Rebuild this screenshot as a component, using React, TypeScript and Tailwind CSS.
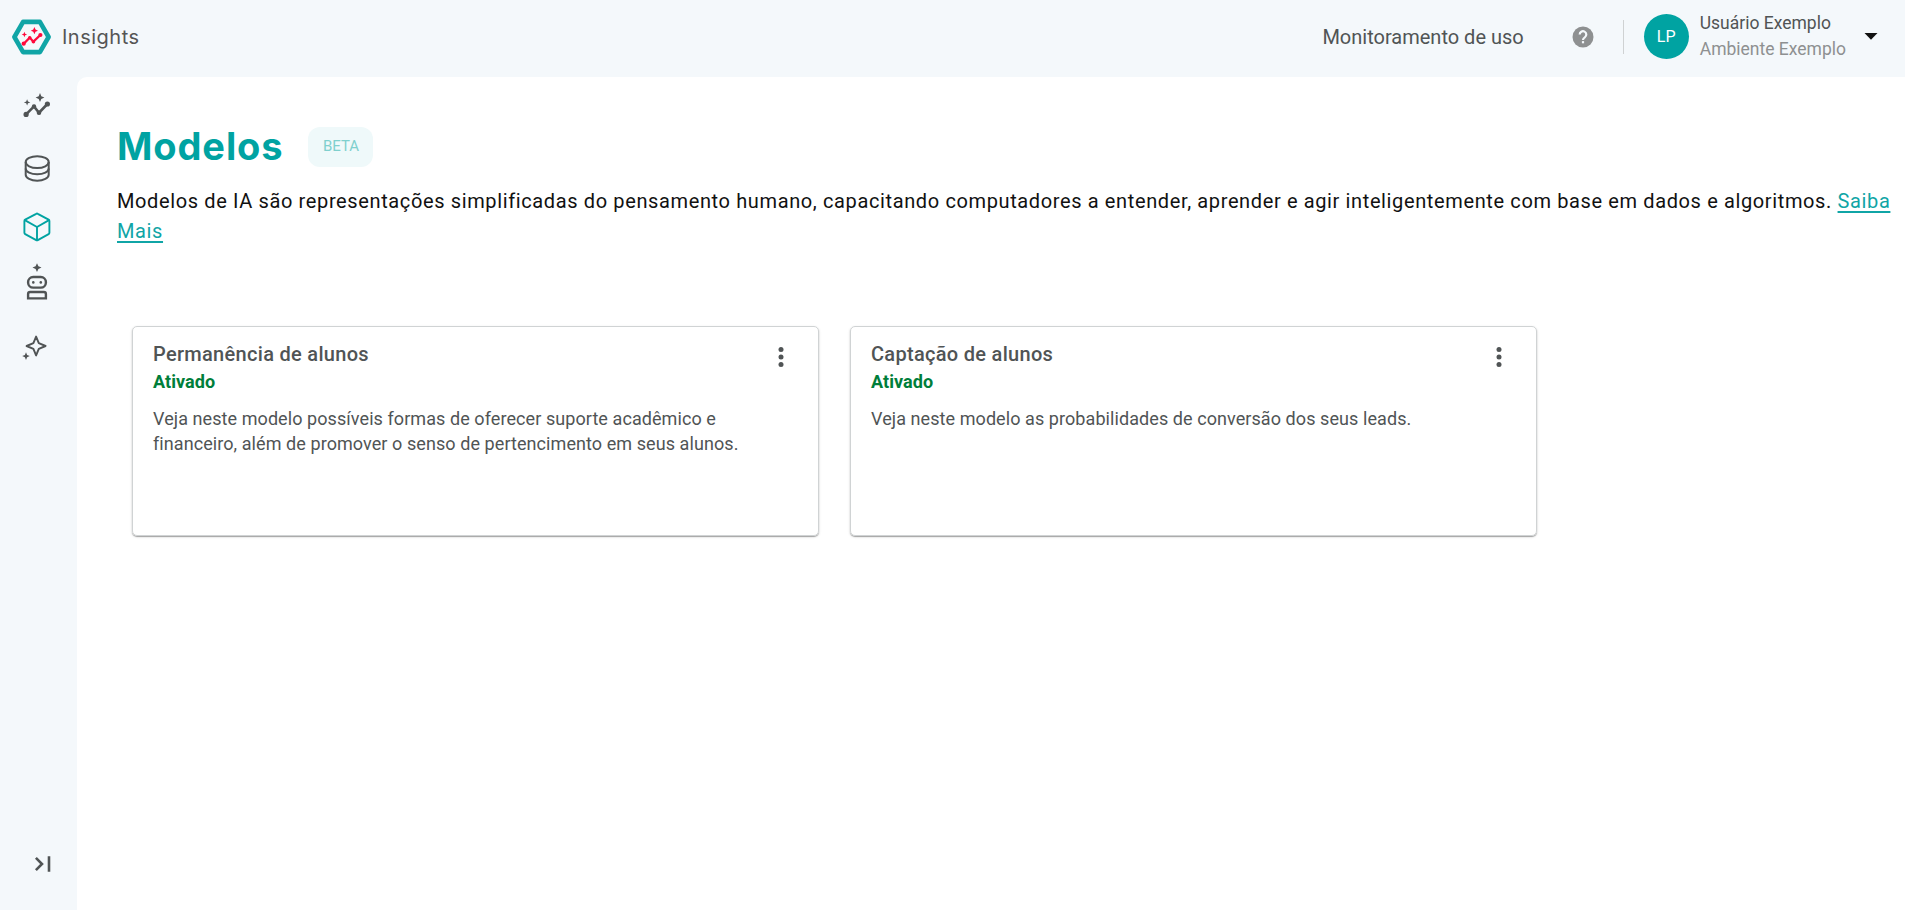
import { ReactNode } from 'react';

interface Model {
  title: string;
  status: string;
  description: string;
}

const models: Model[] = [
  {
    title: 'Permanência de alunos',
    status: 'Ativado',
    description:
      'Veja neste modelo possíveis formas de oferecer suporte acadêmico e financeiro, além de promover o senso de pertencimento em seus alunos.',
  },
  {
    title: 'Captação de alunos',
    status: 'Ativado',
    description: 'Veja neste modelo as probabilidades de conversão dos seus leads.',
  },
];

function Logo() {
  return (
    <svg width="40" height="36" viewBox="0 0 40 36" fill="none">
      <path
        d="M2.4 18 11.1 2.9H27.9L36.6 18 27.9 33.1H11.1Z"
        stroke="#10a5a6"
        strokeWidth="4.6"
        strokeLinejoin="round"
      />
      <g fill="#ff0a3c">
        <circle cx="11.7" cy="24.7" r="2.1" />
        <circle cx="17.7" cy="18.6" r="1.7" />
        <circle cx="21.4" cy="22.7" r="1.8" />
        <circle cx="28.4" cy="16" r="2.1" />
        <path d="M22.4 8.1 23.5 10.6 26 11.7 23.5 12.8 22.4 15.3 21.3 12.8 18.8 11.7 21.3 10.6Z" />
        <path d="M12.4 12.8 13.2 14.7 15.1 15.5 13.2 16.3 12.4 18.2 11.6 16.3 9.7 15.5 11.6 14.7Z" />
      </g>
      <path d="M11.7 24.7 17.7 18.6 21.4 22.7 28.4 16" stroke="#ff0a3c" strokeWidth="2.3" />
    </svg>
  );
}

function InsightsIcon() {
  return (
    <svg width="40" height="40" viewBox="0 0 40 40" fill="none">
      <g fill="currentColor">
        <circle cx="9.1" cy="28.4" r="2.6" />
        <circle cx="17" cy="20.4" r="2.2" />
        <circle cx="22" cy="26.7" r="2.3" />
        <circle cx="30.4" cy="18" r="2.6" />
        <path d="M23 7.1 24.3 10.3 27.4 11.6 24.3 12.9 23 16.1 21.7 12.9 18.6 11.6 21.7 10.3Z" />
        <path d="M10.1 13.2 11 15.5 13.3 16.4 11 17.3 10.1 19.6 9.2 17.3 6.9 16.4 9.2 15.5Z" />
      </g>
      <path d="M9.1 28.4 17 20.4 22 26.7 30.4 18" stroke="currentColor" strokeWidth="2.6" />
    </svg>
  );
}

function DatabaseIcon() {
  return (
    <svg width="40" height="40" viewBox="0 0 40 40" fill="none" stroke="currentColor" strokeWidth="2">
      <ellipse cx="20.2" cy="14.1" rx="11.5" ry="5.9" />
      <path d="M8.7 14.1V26.8C8.7 30 13.8 32.7 20.2 32.7S31.7 30 31.7 26.8V14.1" />
      <path d="M8.7 20.4C8.7 23.7 13.8 26.3 20.2 26.3S31.7 23.7 31.7 20.4" />
    </svg>
  );
}

function CubeIcon() {
  return (
    <svg
      width="40"
      height="40"
      viewBox="0 0 40 40"
      fill="none"
      stroke="currentColor"
      strokeWidth="1.9"
      strokeLinejoin="round"
    >
      <path d="M19.2 6.8a1.6 1.6 0 0 1 1.6 0L31.6 12.7a1.5 1.5 0 0 1 .8 1.3V25.8a1.5 1.5 0 0 1-.8 1.3L20.8 33.1a1.6 1.6 0 0 1-1.6 0L8.2 27.1a1.5 1.5 0 0 1-.8-1.3V14a1.5 1.5 0 0 1 .8-1.3Z" />
      <path d="M7.8 13.2 20 20 32 13.2M20 20V33.3" />
    </svg>
  );
}

function RobotIcon() {
  return (
    <svg width="40" height="40" viewBox="0 0 40 40" fill="none">
      <path
        d="M20 .2 21.4 3.2 24.5 4.6 21.4 6 20 9 18.6 6 15.5 4.6 18.6 3.2Z"
        fill="currentColor"
      />
      <rect x="11.1" y="14" width="17.8" height="10.6" rx="5.1" stroke="currentColor" strokeWidth="2.4" />
      <circle cx="16.3" cy="19.4" r="1.3" fill="currentColor" />
      <circle cx="23.8" cy="19.4" r="1.3" fill="currentColor" />
      <path d="M11.1 35.4V31a2 2 0 0 1 2-2H26.9a2 2 0 0 1 2 2V35.4Z" stroke="currentColor" strokeWidth="2.4" />
    </svg>
  );
}

function SparklesIcon() {
  return (
    <svg width="40" height="40" viewBox="0 0 40 40" fill="none">
      <path
        d="M19.1 9.6 21.8 16.2 28.6 19 21.8 21.8 19.1 28.4 16.4 21.8 9.6 19 16.4 16.2Z"
        stroke="currentColor"
        strokeWidth="1.9"
        strokeLinejoin="round"
      />
      <path
        d="M9 25.2 10.1 28 12.8 29.1 10.1 30.2 9 33 7.9 30.2 5.2 29.1 7.9 28Z"
        fill="currentColor"
      />
    </svg>
  );
}

function NavItem({ children, active = false }: { children: ReactNode; active?: boolean }) {
  return (
    <button type="button" className={`h-10 w-10 ${active ? 'text-[#00a3a2]' : 'text-[#505455]'}`}>
      {children}
    </button>
  );
}

function Header() {
  return (
    <header className="flex h-[77px] items-center pr-[27px] pl-3">
      <div className="-mt-[3px] flex items-center">
        <Logo />
        <span className="ml-[10px] font-['Inter'] text-[20px] leading-[30px] tracking-[0.5px] text-[#555]">
          Insights
        </span>
      </div>

      <div className="-mt-[4px] ml-auto flex items-center">
        <span className="text-xl leading-6 text-[#505455]">Monitoramento de uso</span>
        <svg className="ml-[48px]" width="22" height="22" viewBox="0 0 22 22">
          <circle cx="11" cy="11" r="10.5" fill="#8e9091" />
          <path
            d="M7.7 8.6a3.3 3.3 0 1 1 5.1 2.7c-1.2.8-1.8 1.3-1.8 2.6"
            fill="none"
            stroke="#f4f8fb"
            strokeWidth="2.2"
          />
          <rect x="9.9" y="15.1" width="2.2" height="2.2" fill="#f4f8fb" />
        </svg>
        <div className="ml-[29px] h-[34px] w-px bg-[#cfd2d3]" />
        <div className="ml-5 flex h-[45px] w-[45px] items-center justify-center rounded-full bg-[#00a3a2] text-base text-white">
          LP
        </div>
        <div className="-mt-[2px] ml-[11px] flex flex-col text-[17.5px] leading-[26px]">
          <span className="text-[#505455]">Usuário Exemplo</span>
          <span className="text-[#8e9091]">Ambiente Exemplo</span>
        </div>
        <svg className="ml-[18px]" width="14" height="7" viewBox="0 0 14 7">
          <path d="M.5 0H13.5L7 6.8Z" fill="#111" />
        </svg>
      </div>
    </header>
  );
}

function Sidebar() {
  return (
    <aside className="flex w-[77px] shrink-0 flex-col pl-[17px]">
      <nav className="flex flex-col pt-[9px]">
        <NavItem>
          <InsightsIcon />
        </NavItem>
        <div className="mt-[22px] flex flex-col">
          <NavItem>
            <DatabaseIcon />
          </NavItem>
        </div>
        <div className="mt-[19px] flex flex-col">
          <NavItem active>
            <CubeIcon />
          </NavItem>
        </div>
        <div className="mt-4 flex flex-col">
          <NavItem>
            <RobotIcon />
          </NavItem>
        </div>
        <div className="mt-6 flex flex-col">
          <NavItem>
            <SparklesIcon />
          </NavItem>
        </div>
      </nav>

      <button type="button" className="mt-auto mb-[36px] ml-[17px] w-5 text-[#505455]">
        <svg width="20" height="20" viewBox="0 0 20 20" fill="none" stroke="currentColor" strokeWidth="2.6">
          <path d="M1.9 3.9 8 10 1.9 16.1M15 2.3V17.8" />
        </svg>
      </button>
    </aside>
  );
}

function ModelCard({ title, status, description }: Model) {
  return (
    <article className="h-[210px] w-[687px] rounded-[5px] border border-[#d0d3d4] px-5 pt-[13px] shadow-[0_1px_1px_rgba(0,0,0,0.3),0_1px_3px_rgba(0,0,0,0.12)]">
      <div className="flex justify-between">
        <div>
          <h2 className="text-xl leading-[28px] font-medium tracking-[0.3px] text-[#505455]">{title}</h2>
          <p className="pt-px text-lg leading-[26px] font-bold tracking-[0.07px] text-[#007e3a]">{status}</p>
        </div>
        <button type="button" className="mt-[7px] mr-[14px] h-5 w-[6px] text-[#505455]">
          <svg width="6" height="20" viewBox="0 0 6 20" fill="currentColor">
            <circle cx="3" cy="2.5" r="2.5" />
            <circle cx="3" cy="10" r="2.5" />
            <circle cx="3" cy="17.5" r="2.5" />
          </svg>
        </button>
      </div>
      <p className="mt-[11px] pr-5 text-lg leading-[25px] tracking-[0.075px] text-[#505455]">{description}</p>
    </article>
  );
}

export default function App() {
  return (
    <div className="flex h-screen flex-col overflow-hidden bg-[#f4f8fb] font-['Roboto',sans-serif]">
      <Header />
      <div className="flex min-h-0 flex-1">
        <Sidebar />
        <main className="flex-1 rounded-tl-[10px] bg-white pt-[39px] pl-10">
          <div className="flex h-[60px] items-center">
            <h1 className="w-[191px] font-['Inter'] text-[38px] leading-[60px] font-bold tracking-[0.9px] whitespace-nowrap text-[#00a3a2]">
              Modelos
            </h1>
            <span className="mt-px flex h-10 w-[65px] items-center justify-center rounded-xl bg-[#eff9fa] pl-px text-[15px] text-[#7fd0ce]">
              BETA
            </span>
          </div>

          <p className="mt-[10px] pr-2 text-xl leading-[30px] tracking-[0.625px] text-[#111]">
            Modelos de IA são representações simplificadas do pensamento humano, capacitando computadores a
            entender, aprender e agir inteligentemente com base em dados e algoritmos.{' '}
            <a href="#" className="text-[#10a5a6] underline decoration-2 underline-offset-[3px]">
              Saiba Mais
            </a>
          </p>

          <section className="mt-[80px] flex gap-[31px] pl-[15px]">
            {models.map((model) => (
              <ModelCard key={model.title} {...model} />
            ))}
          </section>
        </main>
      </div>
    </div>
  );
}
